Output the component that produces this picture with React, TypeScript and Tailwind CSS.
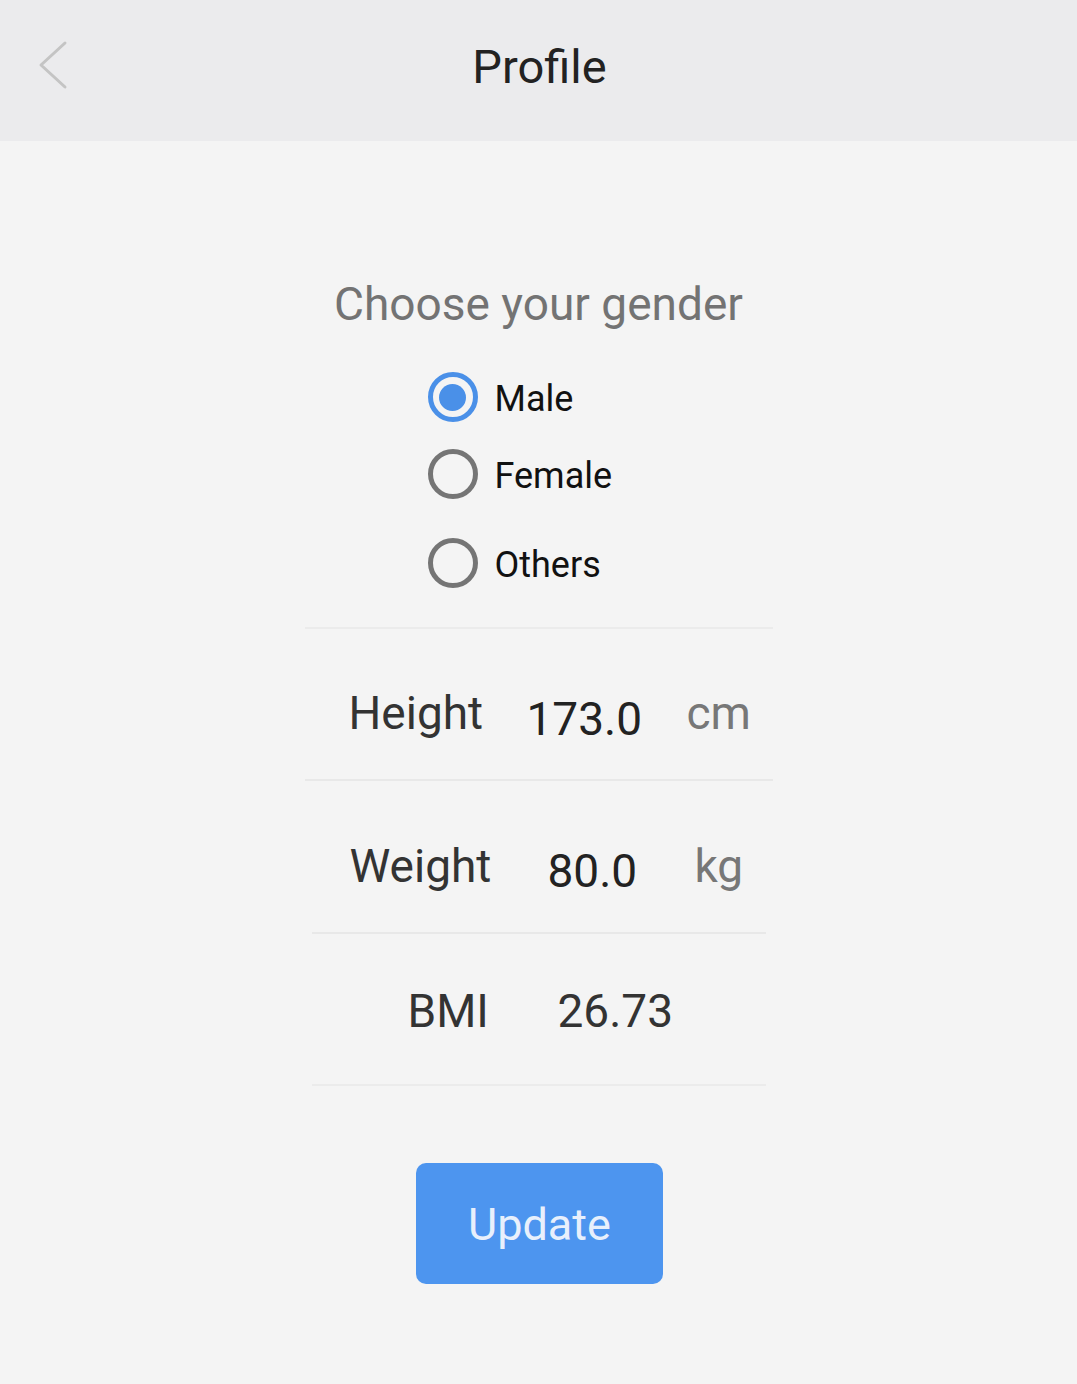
import React from "react";

function Radio({ checked }: { checked?: boolean }) {
  return checked ? (
    <div className="w-[50px] h-[50px] rounded-full border-[5px] border-[#4a90e8] flex items-center justify-center shrink-0">
      <div className="w-[27px] h-[27px] rounded-full bg-[#4a90e8]" />
    </div>
  ) : (
    <div className="w-[50px] h-[50px] rounded-full border-[5px] border-[#757575] shrink-0" />
  );
}

export default function App() {
  return (
    <div
      className="w-[1077px] h-[1384px] bg-[#f4f4f4] overflow-hidden"
      style={{ fontFamily: "Roboto, 'Noto Sans', sans-serif" }}
    >
      {/* Header */}
      <div className="h-[141px] bg-[#ebebed] relative flex justify-center">
        <svg
          className="absolute left-[36px] top-[38px]"
          width="34"
          height="54"
          viewBox="0 0 34 54"
          fill="none"
        >
          <path d="M29 5 L5 27 L29 49" stroke="#c4c4c4" strokeWidth="3" strokeLinecap="round" strokeLinejoin="round" />
        </svg>
        <div className="mt-[43px] text-[47px] leading-[47px] text-[#222] pl-[2px]">Profile</div>
      </div>

      {/* Body */}
      <div className="w-[468px] mx-auto">
        <div className="mt-[140px] text-center text-[46px] leading-[46px] text-[#737373]">
          Choose your gender
        </div>

        <div className="mt-[45px] pl-[123px] flex flex-col">
          <div className="flex items-center">
            <Radio checked />
            <span className="ml-[17px] pt-[4px] text-[36px] leading-[36px] text-[#111]">Male</span>
          </div>
          <div className="flex items-center mt-[27px]">
            <Radio />
            <span className="ml-[17px] pt-[4px] text-[36px] leading-[36px] text-[#111]">Female</span>
          </div>
          <div className="flex items-center mt-[39px]">
            <Radio />
            <span className="ml-[17px] pt-[4px] text-[36px] leading-[36px] text-[#111]">Others</span>
          </div>
        </div>

        <div className="mt-[39px] h-[2px] bg-[#ebebeb]" />

        {/* Height */}
        <div className="h-[150px] flex items-start pl-[44px] text-[46px] leading-[46px]">
          <div className="w-[178px] mt-[61px] text-[#333]">Height</div>
          <div className="w-[160px] mt-[67px] text-[#222]">173.0</div>
          <div className="mt-[61px] text-[#777]">cm</div>
        </div>
        <div className="h-[2px] bg-[#e8e8e8]" />

        {/* Weight */}
        <div className="h-[151px] flex items-start pl-[45px] text-[46px] leading-[46px]">
          <div className="w-[198px] mt-[62px] text-[#333]">Weight</div>
          <div className="w-[147px] mt-[67px] text-[#222]">80.0</div>
          <div className="mt-[62px] text-[#777]">kg</div>
        </div>
        <div className="mx-[7px] h-[2px] bg-[#e8e8e8]" />

        {/* BMI */}
        <div className="h-[150px] flex items-start pl-[103px] text-[46px] leading-[46px]">
          <div className="w-[150px] mt-[54px] text-[#333]">BMI</div>
          <div className="mt-[54px] text-[#333]">26.73</div>
        </div>
        <div className="mx-[7px] h-[2px] bg-[#ebebeb]" />

        <div className="mt-[77px] flex justify-center pl-[2px]">
          <button className="w-[247px] h-[121px] rounded-[10px] bg-[#4d95ef] text-[#e8f0fc] text-[45px] leading-[45px] flex items-center justify-center pt-[2px]">
            Update
          </button>
        </div>
      </div>
    </div>
  );
}
